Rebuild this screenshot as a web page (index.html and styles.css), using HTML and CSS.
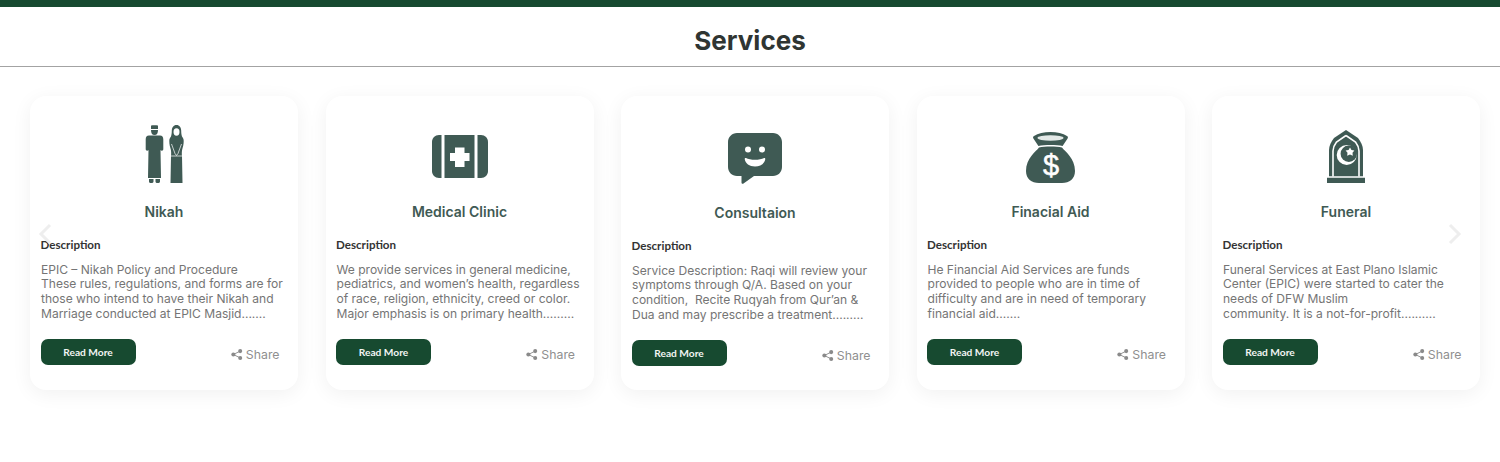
FILE: index.html
```html
<!DOCTYPE html>
<html lang="en">
<head>
<meta charset="utf-8">
<title>Services</title>
<link rel="stylesheet" href="styles.css">
</head>
<body>
<div class="topbar"></div>
<header class="head"><h1>Services</h1></header>
<section class="carousel">
  <svg class="arrow arrow-left" viewBox="0 0 14 22"><path d="M12 2 3 11l9 9"/></svg>
  <svg class="arrow arrow-right" viewBox="0 0 14 22"><path d="M2 2l9 9-9 9"/></svg>

  <article class="card">
    <div class="icon">
      <svg width="42" height="58" viewBox="-2 0 42 58">
        <g class="ink">
          <path d="M6 .5C7 0 12 0 13 .5V4H6z"/>
          <path d="M6 5h7c0 3-1 5-3.500 5S6 8 6 5z"/>
          <path d="M4 10.500h11c2.300 0 3.300 1.500 3.300 4V24c0 1.200-.5 1.700-1.500 1.700-.6 0-1-.2-1.300-.6L16 53H3l.5-27.900c-.3.400-.7.600-1.300.6-1 0-1.500-.5-1.500-1.700v-9.500c0-2.500 1-4 3.300-4z"/>
          <path d="M4 54h4.500v2.500c0 1-1 1.500-2.300 1.500S4 57.500 4 56.500zM10.500 54H15v2.500c0 1-1 1.500-2.300 1.500s-2.200-.5-2.200-1.500z"/>
          <path d="M31.500 0c3 0 4.700 2.500 4.700 5.500 0 2.500.3 4.500.8 6 1 1.200 1.700 2.500 1.700 4.500 0 3.500-.8 6-1.500 8.500-.4 2-.5 4.500-.2 6.500l.5 27H25.500l.5-27c.3-2 .2-4.500-.2-6.500-.7-2.500-1.500-5-1.500-8.500 0-2 .7-3.300 1.700-4.500.5-1.500.8-3.500.8-6 0-3 1.700-5.500 4.700-5.500z"/>
        </g>
        <ellipse cx="31.500" cy="7" rx="3" ry="3.700" fill="#fff"/>
        <path d="M26.500 19l3.500 9.500 1.500 2 1.500-2 3.500-9.500M26 31h11" fill="none" stroke="#fff" stroke-width=".7"/>
      </svg>
    </div>
    <h2 class="title">Nikah</h2>
    <h3 class="label">Description</h3>
    <p class="text">EPIC – Nikah Policy and Procedure<br>These rules, regulations, and forms are for those who intend to have their Nikah and Marriage conducted at EPIC Masjid.......</p>
    <div class="actions">
      <a class="btn">Read More</a>
      <span class="share"><svg width="12" height="11" viewBox="0 0 13 12"><circle cx="2.500" cy="6" r="2.200"/><circle cx="10" cy="2.300" r="2.200"/><circle cx="10" cy="9.700" r="2.200"/><path d="M2.500 6 10 2.300M2.500 6l7.500 3.700" fill="none" stroke="#8a8a8a" stroke-width="1"/></svg>Share</span>
    </div>
  </article>

  <article class="card">
    <div class="icon icon-raised">
      <svg width="56" height="43" viewBox="0 0 56 43">
        <g class="ink">
          <path d="M7 0h2.500v43H7c-4 0-7-3-7-7V7c0-4 3-7 7-7z"/>
          <path d="M12.500 0h30v43h-30z"/>
          <path d="M45.500 0H49c4 0 7 3 7 7v29c0 4-3 7-7 7h-3.500z"/>
        </g>
        <path d="M23 12.500h9.500V18H37.500v8H32.500v6H23v-6H18v-8H23z" fill="#fff"/>
      </svg>
    </div>
    <h2 class="title">Medical Clinic</h2>
    <h3 class="label">Description</h3>
    <p class="text">We provide services in general medicine, pediatrics, and women’s health, regardless of race, religion, ethnicity, creed or color. Major emphasis is on primary health.........</p>
    <div class="actions">
      <a class="btn">Read More</a>
      <span class="share"><svg width="12" height="11" viewBox="0 0 13 12"><circle cx="2.500" cy="6" r="2.200"/><circle cx="10" cy="2.300" r="2.200"/><circle cx="10" cy="9.700" r="2.200"/><path d="M2.500 6 10 2.300M2.500 6l7.500 3.700" fill="none" stroke="#8a8a8a" stroke-width="1"/></svg>Share</span>
    </div>
  </article>

  <article class="card">
    <div class="icon icon-tall">
      <svg width="54" height="51" viewBox="0 0 54 51">
        <path class="ink" d="M9 0h36c5 0 9 4 9 9v25c0 5-4 9-9 9H26L15.500 50.500c-1 .7-2 0-2-1V43H9c-5 0-9-4-9-9V9c0-5 4-9 9-9z"/>
        <circle cx="20" cy="16.500" r="3" fill="#fff"/>
        <circle cx="34" cy="16.500" r="3" fill="#fff"/>
        <path d="M18 25c2 1 5.500 1.800 9 1.800s7-.8 9-1.800c.8-.3 1.300.2 1.300 1C36.800 30.500 32.500 33.500 27 33.500S17.200 30.500 16.700 26c0-.8.500-1.300 1.300-1z" fill="#fff"/>
      </svg>
    </div>
    <h2 class="title">Consultaion</h2>
    <h3 class="label">Description</h3>
    <p class="text">Service Description: Raqi will review your symptoms through Q/A. Based on your condition,&nbsp; Recite Ruqyah from Qur’an &amp; Dua and may prescribe a treatment.........</p>
    <div class="actions">
      <a class="btn">Read More</a>
      <span class="share"><svg width="12" height="11" viewBox="0 0 13 12"><circle cx="2.500" cy="6" r="2.200"/><circle cx="10" cy="2.300" r="2.200"/><circle cx="10" cy="9.700" r="2.200"/><path d="M2.500 6 10 2.300M2.500 6l7.500 3.700" fill="none" stroke="#8a8a8a" stroke-width="1"/></svg>Share</span>
    </div>
  </article>

  <article class="card">
    <div class="icon">
      <svg width="49" height="51" viewBox="0 0 49 51">
        <g class="ink">
          <path d="M8 4c4-2.500 10-4 16.500-4S37 1.500 41 4c1 .6 1.200 1.500.6 2.500-1.500 2.500-3.500 5-5 7.500-6-1.300-18-1.300-24.200 0-1.500-2.500-3.500-5-5-7.500C6.800 5.500 7 4.600 8 4z"/>
          <path d="M13 15.500c6-1.300 17-1.300 23 0 3 4 13 10.500 13 23.500 0 8-5.500 12-13 12H13C5.500 51 0 47 0 39c0-13 10-19.500 13-23.500z"/>
        </g>
        <ellipse cx="24.500" cy="6" rx="13" ry="2.700" fill="#e3e9e7"/>
        <text class="dollar" x="25" y="43" text-anchor="middle">$</text>
      </svg>
    </div>
    <h2 class="title">Finacial Aid</h2>
    <h3 class="label">Description</h3>
    <p class="text">He Financial Aid Services are funds provided to people who are in time of difficulty and are in need of temporary financial aid.......</p>
    <div class="actions">
      <a class="btn">Read More</a>
      <span class="share"><svg width="12" height="11" viewBox="0 0 13 12"><circle cx="2.500" cy="6" r="2.200"/><circle cx="10" cy="2.300" r="2.200"/><circle cx="10" cy="9.700" r="2.200"/><path d="M2.500 6 10 2.300M2.500 6l7.500 3.700" fill="none" stroke="#8a8a8a" stroke-width="1"/></svg>Share</span>
    </div>
  </article>

  <article class="card">
    <div class="icon">
      <svg width="38" height="53" viewBox="0 0 38 53">
        <g class="ink">
          <path d="M19 0l12 8c3 4 5 8 5 12v26.500H2V20c0-4 2-8 5-12z"/>
          <path d="M0 47.500h38V53H0z"/>
        </g>
        <path d="M19 5.500l9.500 6.500c2.300 3 3.500 6 3.500 9v25.500M19 5.500L9.500 12C7.200 15 6 18 6 21v25.500" fill="none" stroke="#fff" stroke-width="1.600"/>
        <path d="M0 47h38" stroke="#fff" stroke-width="1"/>
        <circle cx="19.700" cy="25" r="10" fill="#fff"/>
        <circle cx="21.800" cy="23.800" r="8.200" fill="#3f5a54"/>
        <path d="M23 17.500l1.500 2.500 2.900.6-1.900 2.200.3 3-2.800-1.200-2.800 1.200.3-3-1.900-2.200 2.900-.6z" fill="#fff"/>
      </svg>
    </div>
    <h2 class="title">Funeral</h2>
    <h3 class="label">Description</h3>
    <p class="text">Funeral Services at East Plano Islamic Center (EPIC) were started to cater the needs of DFW Muslim<br>community. It is a not-for-profit..........</p>
    <div class="actions">
      <a class="btn">Read More</a>
      <span class="share"><svg width="12" height="11" viewBox="0 0 13 12"><circle cx="2.500" cy="6" r="2.200"/><circle cx="10" cy="2.300" r="2.200"/><circle cx="10" cy="9.700" r="2.200"/><path d="M2.500 6 10 2.300M2.500 6l7.500 3.700" fill="none" stroke="#8a8a8a" stroke-width="1"/></svg>Share</span>
    </div>
  </article>
</section>
</body>
</html>
```
FILE: styles.css
```css
* { box-sizing: border-box; }
html, body { margin: 0; padding: 0; background: #fff; }
body { font-family: Inter, "Liberation Sans", sans-serif; height: 462px; overflow: hidden; }

.topbar { height: 7px; background: #174a30; }
.head {
  height: 60px;
  border-bottom: 1px solid #a3a3a3;
  display: flex;
  align-items: center;
  justify-content: center;
  padding-top: 8px;
}
.head h1 { margin: 0; font-size: 26px; font-weight: 700; color: #2f3532; line-height: 1; }

.carousel {
  position: relative;
  display: flex;
  gap: 27.500px;
  padding: 29px 20px 0 30px;
}
.arrow { position: absolute; top: 156px; width: 14px; height: 22px; fill: none; stroke: #eeeeee; stroke-width: 3; }
.arrow-left { left: 38px; }
.arrow-right { left: 1448px; }

.card {
  flex: 0 0 268px;
  height: 294px;
  background: #fff;
  border-radius: 16px;
  box-shadow: 0 4px 20px rgba(0, 0, 0, 0.06);
  padding: 0 10.500px;
  display: flex;
  flex-direction: column;
}
.icon { height: 105px; padding-bottom: 18px; display: flex; align-items: flex-end; justify-content: center; flex: none; }
.icon-tall { height: 106px; }
.icon-raised { padding-bottom: 23px; }
.ink { fill: #3f5a54; }
.dollar { font-family: "Liberation Sans", sans-serif; font-size: 29px; font-weight: 400; fill: #fff; stroke: #fff; stroke-width: .5px; }

.title { margin: 0; height: 21px; font-size: 14px; line-height: 21px; font-weight: 600; color: #3f5a54; text-align: center; }
.label { margin: 14px 0 0; height: 18px; font-family: Lato, sans-serif; font-size: 11.600px; line-height: 18px; font-weight: 700; color: #333; }
.text { margin: 8.500px 0 0; height: 59px; font-size: 12.050px; line-height: 14.700px; color: #757575; padding-left: .5px; }

.actions { margin-top: 17.500px; display: flex; align-items: center; justify-content: space-between; padding-right: 8px; }
.btn {
  width: 95px;
  height: 26px;
  border-radius: 7px;
  background: #174a30;
  color: #f2f5f3;
  font-family: Lato, sans-serif;
  font-size: 10.200px;
  font-weight: 700;
  display: flex;
  align-items: center;
  justify-content: center;
}
.share { display: flex; align-items: center; gap: 3px; font-size: 12.300px; color: #8f8f8f; padding-top: 4px; }
.share svg { fill: #8a8a8a; }
```
